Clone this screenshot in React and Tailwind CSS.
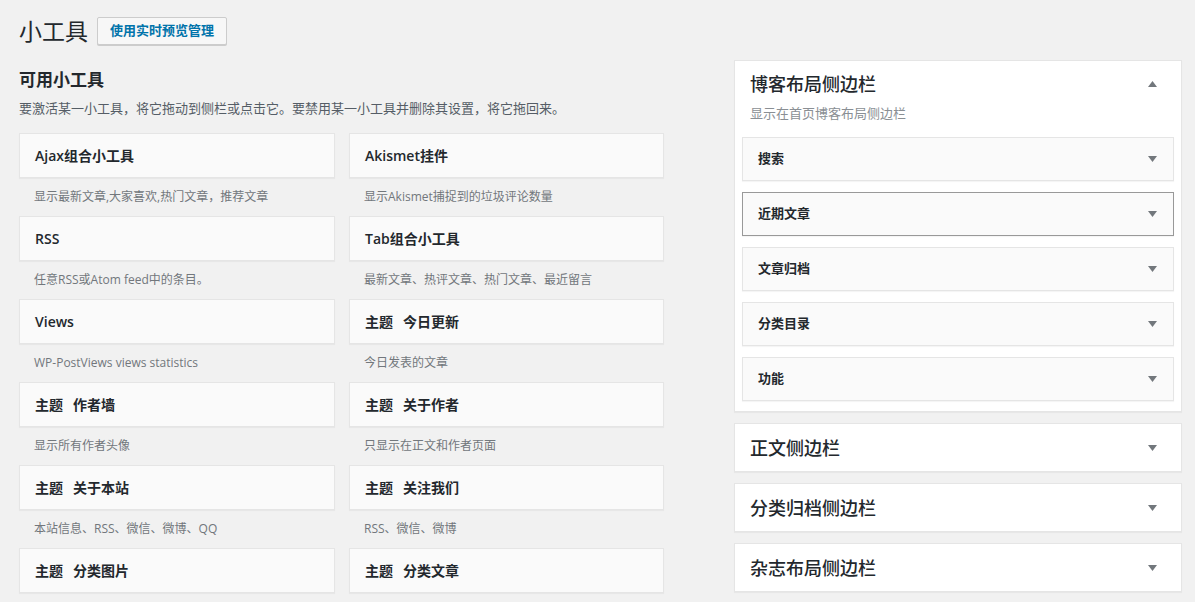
import React from 'react';

const available = [
    { title: 'Ajax组合小工具', desc: '显示最新文章,大家喜欢,热门文章，推荐文章' },
    { title: 'Akismet挂件', desc: '显示Akismet捕捉到的垃圾评论数量' },
    { title: 'RSS', desc: '任意RSS或Atom feed中的条目。' },
    { title: 'Tab组合小工具', desc: '最新文章、热评文章、热门文章、最近留言' },
    { title: 'Views', desc: 'WP-PostViews views statistics' },
    { title: '今日更新', theme: true, desc: '今日发表的文章' },
    { title: '作者墙', theme: true, desc: '显示所有作者头像' },
    { title: '关于作者', theme: true, desc: '只显示在正文和作者页面' },
    { title: '关于本站', theme: true, desc: '本站信息、RSS、微信、微博、QQ' },
    { title: '关注我们', theme: true, desc: 'RSS、微信、微博' },
    { title: '分类图片', theme: true, desc: '' },
    { title: '分类文章', theme: true, desc: '' },
];

const blogWidgets = ['搜索', '近期文章', '文章归档', '分类目录', '功能'];

const otherSidebars = ['正文侧边栏', '分类归档侧边栏', '杂志布局侧边栏'];

const Arrow = ({ up }) => (
    <svg width="9" height="6" viewBox="0 0 9 6" className="block">
        {up ? <path d="M4.5 0 L9 6 L0 6 Z" fill="#72777c" /> : <path d="M0 0 L9 0 L4.5 6 Z" fill="#72777c" />}
    </svg>
);

const App = () => {
    return (
        <div className="min-h-screen w-[1195px] h-[602px] overflow-hidden bg-[#f1f1f1] text-[#23282d] font-['Open_Sans','Noto_Sans_CJK_SC',sans-serif]">

            <div className="flex items-center pl-[19px] pt-[17px] h-[45px]">
                <h1 className="text-[23px] leading-[28px] font-normal text-[#23282d]">小工具</h1>
                <button className="ml-[9px] h-[28px] px-[12px] border border-[#cccccc] bg-[#f7f7f7] rounded-[2px] text-[13px] font-semibold text-[#0073aa] shadow-[0_1px_0_#cccccc]">
                    使用实时预览管理
                </button>
            </div>

            <div className="flex mt-[15px]">
                {/* available widgets */}
                <div className="w-[645px] ml-[19px]">
                    <h2 className="mt-[8px] text-[17px] leading-[24px] font-semibold">可用小工具</h2>
                    <p className="mt-[6px] text-[13px] leading-[20px] text-[#555d66]">
                        要激活某一小工具，将它拖动到侧栏或点击它。要禁用某一小工具并删除其设置，将它拖回来。
                    </p>
                    <div className="mt-[15px] grid grid-cols-[316px_315px] gap-x-[14px]">
                        {available.map((w, i) => (
                            <div key={i} className="h-[83px]">
                                <div className="h-[45px] flex items-center px-[15px] bg-[#fafafa] border border-[#e5e5e5] shadow-[0_1px_1px_rgba(0,0,0,0.04)] text-[14px] font-semibold text-[#23282d]">
                                    {w.theme && <span className="mr-[10px]">主题</span>}
                                    <span>{w.title}</span>
                                </div>
                                <div className="h-[38px] flex items-center px-[15px] text-[12px] text-[#72777c]">
                                    {w.desc}
                                </div>
                            </div>
                        ))}
                    </div>
                </div>

                {/* sidebars */}
                <div className="w-[448px] ml-[70px] flex flex-col gap-[11px]">
                    <div className="bg-white border border-[#e5e5e5] shadow-[0_1px_1px_rgba(0,0,0,0.04)] px-[7px] pb-[10px]">
                        <div className="flex items-start pl-[8px] pt-[11px]">
                            <div className="flex-1">
                                <h3 className="text-[18px] leading-[24px] font-medium text-[#23282d]">博客布局侧边栏</h3>
                                <p className="mt-[7px] text-[13px] leading-[20px] text-[#8a8f94]">显示在首页博客布局侧边栏</p>
                            </div>
                            <div className="w-[30px] h-[24px] flex items-center justify-center mr-[7px]">
                                <Arrow up />
                            </div>
                        </div>
                        <div className="mt-[14px] flex flex-col gap-[11px]">
                            {blogWidgets.map((w, i) => (
                                <div
                                    key={i}
                                    className={`h-[44px] flex items-center pl-[15px] bg-[#fafafa] border shadow-[0_1px_1px_rgba(0,0,0,0.04)] ${i === 1 ? 'border-[#999999]' : 'border-[#e5e5e5]'}`}
                                >
                                    <span className="flex-1 text-[13px] font-semibold text-[#23282d]">{w}</span>
                                    <div className="w-[30px] flex justify-center mr-[6px]">
                                        <Arrow />
                                    </div>
                                </div>
                            ))}
                        </div>
                    </div>

                    {otherSidebars.map((s, i) => (
                        <div key={i} className="h-[49px] flex items-center pl-[15px] bg-white border border-[#e5e5e5] shadow-[0_1px_1px_rgba(0,0,0,0.04)]">
                            <h3 className="flex-1 text-[18px] leading-[24px] font-medium text-[#23282d]">{s}</h3>
                            <div className="w-[30px] flex justify-center mr-[14px]">
                                <Arrow />
                            </div>
                        </div>
                    ))}
                </div>
            </div>
        </div>
    );
};

export default App;
